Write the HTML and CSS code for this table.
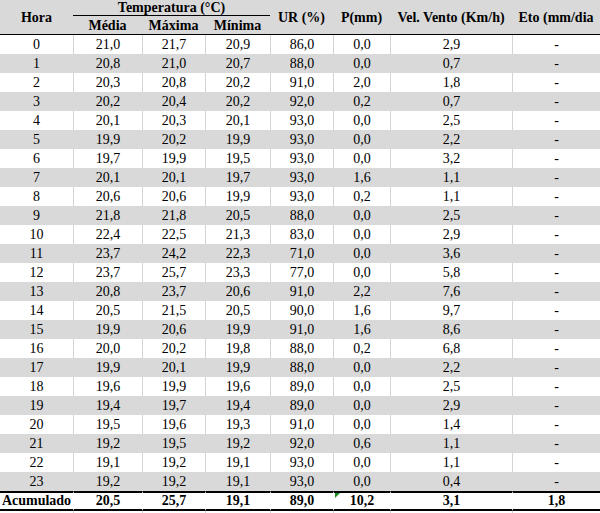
FILE: index.html
```html
<!DOCTYPE html>
<html lang="pt">
<head>
<meta charset="utf-8">
<title>Dados horários</title>
<link rel="stylesheet" href="styles.css">
</head>
<body>
<table class="sheet">
  <colgroup>
    <col class="c-hora">
    <col class="c-med">
    <col class="c-max">
    <col class="c-min">
    <col class="c-ur">
    <col class="c-p">
    <col class="c-vel">
    <col class="c-eto">
  </colgroup>
  <thead>
    <tr class="h1">
      <th rowspan="2" class="hb">Hora</th>
      <th colspan="3" class="temp">Temperatura (°C)</th>
      <th rowspan="2" class="hb">UR (%)</th>
      <th rowspan="2" class="hb">P(mm)</th>
      <th rowspan="2" class="hb">Vel. Vento (Km/h)</th>
      <th rowspan="2" class="hb">Eto (mm/dia</th>
    </tr>
    <tr class="h2">
      <th class="hb">Média</th>
      <th class="hb">Máxima</th>
      <th class="hb">Mínima</th>
    </tr>
  </thead>
  <tbody>
    <tr><td>0</td><td>21,0</td><td>21,7</td><td>20,9</td><td>86,0</td><td>0,0</td><td>2,9</td><td>-</td></tr>
    <tr class="alt"><td>1</td><td>20,8</td><td>21,0</td><td>20,7</td><td>88,0</td><td>0,0</td><td>0,7</td><td>-</td></tr>
    <tr><td>2</td><td>20,3</td><td>20,8</td><td>20,2</td><td>91,0</td><td>2,0</td><td>1,8</td><td>-</td></tr>
    <tr class="alt"><td>3</td><td>20,2</td><td>20,4</td><td>20,2</td><td>92,0</td><td>0,2</td><td>0,7</td><td>-</td></tr>
    <tr><td>4</td><td>20,1</td><td>20,3</td><td>20,1</td><td>93,0</td><td>0,0</td><td>2,5</td><td>-</td></tr>
    <tr class="alt"><td>5</td><td>19,9</td><td>20,2</td><td>19,9</td><td>93,0</td><td>0,0</td><td>2,2</td><td>-</td></tr>
    <tr><td>6</td><td>19,7</td><td>19,9</td><td>19,5</td><td>93,0</td><td>0,0</td><td>3,2</td><td>-</td></tr>
    <tr class="alt"><td>7</td><td>20,1</td><td>20,1</td><td>19,7</td><td>93,0</td><td>1,6</td><td>1,1</td><td>-</td></tr>
    <tr><td>8</td><td>20,6</td><td>20,6</td><td>19,9</td><td>93,0</td><td>0,2</td><td>1,1</td><td>-</td></tr>
    <tr class="alt"><td>9</td><td>21,8</td><td>21,8</td><td>20,5</td><td>88,0</td><td>0,0</td><td>2,5</td><td>-</td></tr>
    <tr><td>10</td><td>22,4</td><td>22,5</td><td>21,3</td><td>83,0</td><td>0,0</td><td>2,9</td><td>-</td></tr>
    <tr class="alt"><td>11</td><td>23,7</td><td>24,2</td><td>22,3</td><td>71,0</td><td>0,0</td><td>3,6</td><td>-</td></tr>
    <tr><td>12</td><td>23,7</td><td>25,7</td><td>23,3</td><td>77,0</td><td>0,0</td><td>5,8</td><td>-</td></tr>
    <tr class="alt"><td>13</td><td>20,8</td><td>23,7</td><td>20,6</td><td>91,0</td><td>2,2</td><td>7,6</td><td>-</td></tr>
    <tr><td>14</td><td>20,5</td><td>21,5</td><td>20,5</td><td>90,0</td><td>1,6</td><td>9,7</td><td>-</td></tr>
    <tr class="alt"><td>15</td><td>19,9</td><td>20,6</td><td>19,9</td><td>91,0</td><td>1,6</td><td>8,6</td><td>-</td></tr>
    <tr><td>16</td><td>20,0</td><td>20,2</td><td>19,8</td><td>88,0</td><td>0,2</td><td>6,8</td><td>-</td></tr>
    <tr class="alt"><td>17</td><td>19,9</td><td>20,1</td><td>19,9</td><td>88,0</td><td>0,0</td><td>2,2</td><td>-</td></tr>
    <tr><td>18</td><td>19,6</td><td>19,9</td><td>19,6</td><td>89,0</td><td>0,0</td><td>2,5</td><td>-</td></tr>
    <tr class="alt"><td>19</td><td>19,4</td><td>19,7</td><td>19,4</td><td>89,0</td><td>0,0</td><td>2,9</td><td>-</td></tr>
    <tr><td>20</td><td>19,5</td><td>19,6</td><td>19,3</td><td>91,0</td><td>0,0</td><td>1,4</td><td>-</td></tr>
    <tr class="alt"><td>21</td><td>19,2</td><td>19,5</td><td>19,2</td><td>92,0</td><td>0,6</td><td>1,1</td><td>-</td></tr>
    <tr><td>22</td><td>19,1</td><td>19,2</td><td>19,1</td><td>93,0</td><td>0,0</td><td>1,1</td><td>-</td></tr>
    <tr class="alt"><td>23</td><td>19,2</td><td>19,2</td><td>19,1</td><td>93,0</td><td>0,0</td><td>0,4</td><td>-</td></tr>
    <tr class="total"><td>Acumulado</td><td>20,5</td><td>25,7</td><td>19,1</td><td>89,0</td><td class="flag">10,2</td><td>3,1</td><td>1,8</td></tr>
    <tr class="filler"><td></td><td></td><td></td><td></td><td></td><td></td><td></td><td></td></tr>
  </tbody>
</table>
</body>
</html>
```

FILE: styles.css
```css
html, body {
  margin: 0;
  padding: 0;
  background: #ffffff;
}

body {
  font-family: "Liberation Serif", "Times New Roman", serif;
  font-size: 14px;
  color: #000000;
  overflow: hidden;
}

.sheet {
  table-layout: fixed;
  width: 600px;
  border-collapse: separate;
  border-spacing: 0;
}

.c-hora { width: 73px; }
.c-med { width: 69px; }
.c-max { width: 63px; }
.c-min { width: 65px; }
.c-ur { width: 63px; }
.c-p { width: 57px; }
.c-vel { width: 122px; }
.c-eto { width: 88px; }

th, td {
  padding: 0;
  text-align: center;
  white-space: nowrap;
  overflow: hidden;
}

thead th {
  background: #d9d9d9;
  font-weight: bold;
  line-height: 15px;
}

.h1 th.temp {
  height: 15px;
  border-bottom: 1px solid #000000;
}

.h2 th {
  height: 18px;
}

th.hb {
  border-bottom: 1px solid #000000;
}

tbody td {
  height: 19px;
  line-height: 19px;
  border-left: 1px solid #d4d4d4;
  background: #ffffff;
}

tbody td:first-child {
  border-left: none;
}

tbody tr.alt td {
  background: #d9d9d9;
  border-left-color: #d9d9d9;
}

tbody tr.total td {
  height: 16px;
  line-height: 16px;
  font-weight: bold;
  border-top: 2px solid #000000;
  border-bottom: 2px solid #000000;
  border-left-color: #ffffff;
}

td.flag {
  position: relative;
}

td.flag::before {
  content: "";
  position: absolute;
  left: 1px;
  top: 0;
  width: 0;
  height: 0;
  border-top: 5px solid #1f8a1f;
  border-right: 5px solid transparent;
}

tbody tr.filler td {
  height: 10px;
  line-height: 10px;
}
```
